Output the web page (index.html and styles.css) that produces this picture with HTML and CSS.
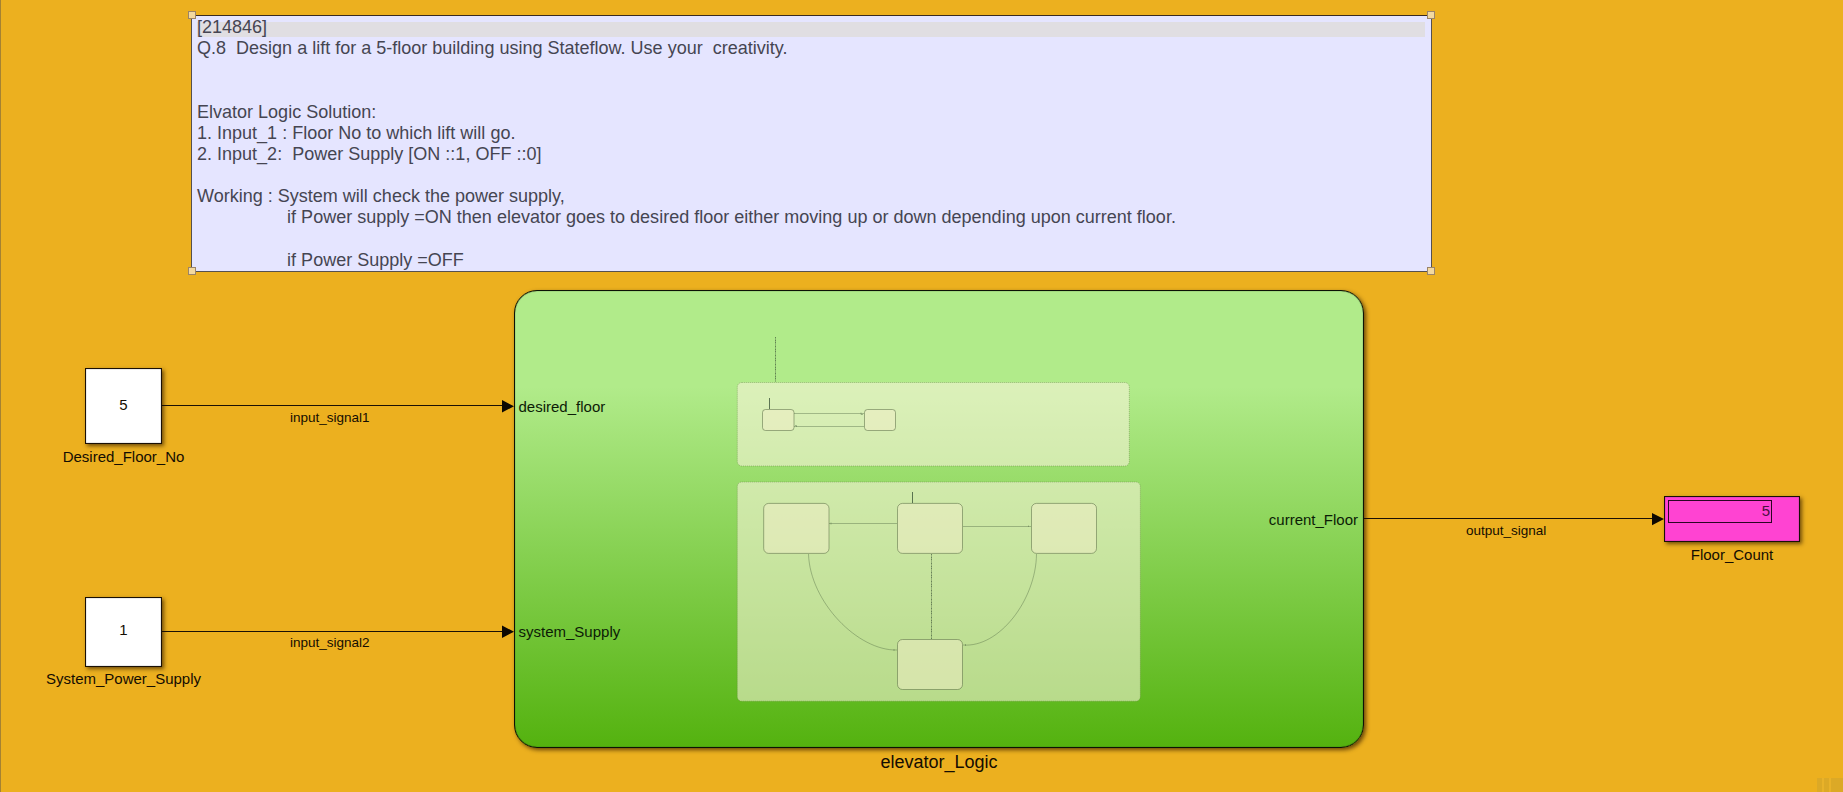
FILE: index.html
```html
<!DOCTYPE html>
<html lang="en">
<head>
<meta charset="utf-8">
<title>elevator_Logic</title>
<link rel="stylesheet" href="styles.css">
</head>
<body>
<main class="canvas">
  <section class="note">
    <div class="note-bar"></div>
    <pre class="note-text">[214846]
Q.8  Design a lift for a 5-floor building using Stateflow. Use your  creativity.


Elvator Logic Solution:
1. Input_1 : Floor No to which lift will go.
2. Input_2:  Power Supply [ON ::1, OFF ::0]

Working : System will check the power supply,
                  if Power supply =ON then elevator goes to desired floor either moving up or down depending upon current floor.

                  if Power Supply =OFF</pre>
    <i class="handle handle-tl"></i>
    <i class="handle handle-tr"></i>
    <i class="handle handle-bl"></i>
    <i class="handle handle-br"></i>
  </section>

  <div class="block constant floor-no">5</div>
  <div class="label floor-no-name">Desired_Floor_No</div>
  <div class="block constant supply">1</div>
  <div class="label supply-name">System_Power_Supply</div>

  <section class="chart"></section>
  <div class="port port-floor">desired_floor</div>
  <div class="port port-supply">system_Supply</div>
  <div class="port port-out">current_Floor</div>
  <div class="label chart-name">elevator_Logic</div>

  <div class="block display"><div class="readout">5</div></div>
  <div class="label display-name">Floor_Count</div>

  <div class="signal signal-1">input_signal1</div>
  <div class="signal signal-2">input_signal2</div>
  <div class="signal signal-3">output_signal</div>

  <svg class="wires" width="1843" height="792" viewBox="0 0 1843 792">
    <g class="wire">
      <path d="M162 405.5H504M162 631.5H504M1364 518.5H1654"/>
    </g>
    <g class="arrow">
      <path d="M502 400V412.500L514 406.300ZM502 625.500V638L514 631.700ZM1652 513V525.200L1664 519Z"/>
    </g>
    <g class="region">
      <rect x="737.300" y="382.500" width="392" height="83.500" rx="4.500"/>
      <rect x="737.300" y="482" width="403" height="219.200" rx="4.500"/>
    </g>
    <g class="state">
      <rect x="762.500" y="409.500" width="31.500" height="21" rx="3"/>
      <rect x="864.500" y="409.500" width="31" height="21" rx="3"/>
      <rect x="763.700" y="503.400" width="65.300" height="50" rx="5"/>
      <rect x="897.500" y="503.400" width="65" height="50" rx="5"/>
      <rect x="1031.500" y="503.400" width="65" height="50" rx="5"/>
      <rect x="897.500" y="639.500" width="65" height="50" rx="5"/>
    </g>
    <g class="transition">
      <path d="M794 413.500H864M794 426.500H864M829 523.500H897M963 526.500H1031M931.500 554V639"/>
      <path d="M808.500 554C810 602 858 651 897 650M1036.500 554C1036 600 999 648 963 645"/>
      <path d="M861 412.500V414.500H863M796.500 427V425.500H795M831 522.500V524.500M1028.500 525.500V527M894 649V651M965.500 644V646M775.500 337V382"/>
    </g>
    <g class="default-transition">
      <path d="M769.500 398V409M912.500 492V503"/>
      <path class="dotted" d="M775.500 337V382M931.500 554V639"/>
    </g>
  </svg>
  <div class="corner-mark"></div>
</main>
</body>
</html>
```
FILE: styles.css
```css
body {
  margin: 0;
}

.canvas {
  position: relative;
  box-sizing: border-box;
  width: 1843px;
  height: 792px;
  overflow: hidden;
  border-left: 1px solid #a58232;
  background: #ecb01f;
  color: #140d02;
  font: 15px/18px "Liberation Sans", Arial, sans-serif;
}

.canvas > * {
  position: absolute;
  margin-left: -1px;
}

.note {
  left: 191px;
  top: 15px;
  width: 1239px;
  height: 255px;
  border: 1px solid #55504f;
  border-top-color: #3a2a20;
  background: #e5e5ff;
}

.note-bar {
  position: absolute;
  left: 5px;
  top: 6px;
  width: 1228px;
  height: 15px;
  background: #e0dee2;
}

.note-text {
  position: relative;
  margin: 1px 0 0 5px;
  color: #454552;
  font: 18.02px/21.14px "Liberation Sans", Arial, sans-serif;
  white-space: pre;
}

.handle {
  position: absolute;
  width: 6px;
  height: 6px;
  border: 1px solid #9b8468;
  background: #f3d9a0;
}

.handle-tl { left: -4px; top: -5px; }
.handle-tr { right: -4px; top: -5px; }
.handle-bl { left: -4px; bottom: -4px; }
.handle-br { right: -4px; bottom: -4px; }

.block {
  box-sizing: border-box;
  border: 1px solid #1a1005;
  box-shadow: inset 0 0 1px rgba(20, 12, 0, 0.8), 2px 2px 4px rgba(60, 35, 0, 0.7);
}

.constant {
  display: flex;
  align-items: center;
  justify-content: center;
  left: 85px;
  width: 77px;
  background: #fff;
}

.floor-no { top: 368px; height: 76px; padding-bottom: 2px; }
.supply { top: 597px; height: 70px; padding-bottom: 4px; }

.label {
  text-align: center;
  white-space: nowrap;
}

.floor-no-name { left: 23px; top: 448px; width: 201px; }
.supply-name { left: 23px; top: 670px; width: 201px; }

.chart {
  box-sizing: border-box;
  left: 514px;
  top: 290px;
  width: 850px;
  height: 458px;
  border: 1px solid #0d1205;
  border-radius: 23px;
  background: linear-gradient(#b1eb8a 0, #b1eb8a 21%, #54b20f 100%);
  box-shadow: inset 0 0 1px rgba(10, 16, 0, 0.8), 2px 2px 4px rgba(60, 35, 0, 0.75);
}

.port {
  color: #0c1c06;
  white-space: nowrap;
}

.port-floor { left: 518.5px; top: 398px; }
.port-supply { left: 518.5px; top: 623px; }
.port-out { right: 485px; top: 511px; }

.chart-name {
  left: 839px;
  top: 752px;
  width: 200px;
  font-size: 18px;
  line-height: 21px;
}

.display {
  left: 1664px;
  top: 496px;
  width: 136px;
  height: 46px;
  padding: 3px;
  background: #ff43d2;
}

.readout {
  box-sizing: border-box;
  width: 104px;
  height: 23px;
  padding-right: 1px;
  border: 1px solid #2b0622;
  color: #4a1040;
  line-height: 20px;
  text-align: right;
}

.display-name { left: 1632px; top: 546px; width: 200px; }

.signal {
  font-size: 13.5px;
  line-height: 16px;
  white-space: nowrap;
}

.signal-1 { left: 290px; top: 410px; }
.signal-2 { left: 290px; top: 635px; }
.signal-3 { left: 1466px; top: 523px; }

.wires {
  left: 0;
  top: 0;
}

.wire { fill: none; stroke: #1a1005; stroke-width: 1; }
.arrow { fill: #0d0802; }
.region { fill: rgba(252, 244, 222, 0.57); stroke: rgba(80, 110, 50, 0.4); stroke-dasharray: 1 1; }
.state { fill: rgba(242, 238, 200, 0.5); stroke: rgba(80, 100, 60, 0.5); }
.transition { fill: none; stroke: rgba(70, 95, 60, 0.38); }
.default-transition { fill: none; stroke: rgba(50, 75, 50, 0.75); }
.dotted { stroke-dasharray: 1 2 1 1 1 3; stroke: rgba(50, 75, 50, 0.45); }

.corner-mark {
  left: 1817px;
  top: 778px;
  width: 26px;
  height: 14px;
  background: linear-gradient(90deg, #dca926 0 5px, #e9b229 5px 7px, #dca926 7px 12px, #e9b229 12px 14px, #dca926 14px);
}
```
